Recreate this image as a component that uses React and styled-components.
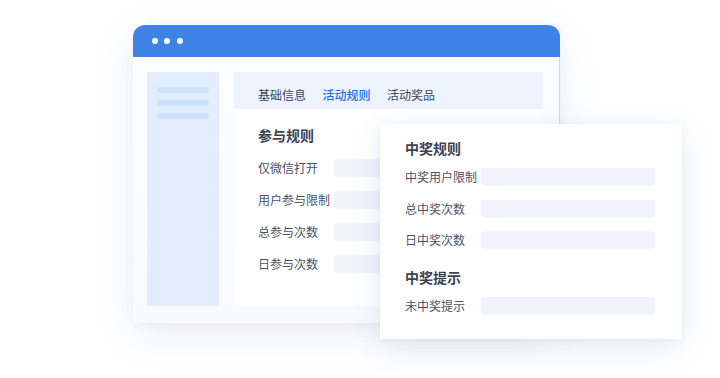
import styled, { createGlobalStyle } from 'styled-components';

const GlobalStyle = createGlobalStyle`
	* {
		box-sizing: border-box;
	}
	body {
		margin: 0;
		background: #fff;
		font-family: 'Noto Sans CJK SC', 'Noto Sans', sans-serif;
		-webkit-font-smoothing: antialiased;
	}
`;

const tabs = [
	{ label: '基础信息' },
	{ label: '活动规则', active: true },
	{ label: '活动奖品' },
];

const joinRules = ['仅微信打开', '用户参与限制', '总参与次数', '日参与次数'];
const winRules = ['中奖用户限制', '总中奖次数', '日中奖次数'];

export default function App() {
	return (
		<>
			<GlobalStyle />
			<Stage>
				<Window>
					<TitleBar>
						<Dot />
						<Dot />
						<Dot />
					</TitleBar>
					<WindowBody>
						<Sidebar>
							<SideLine />
							<SideLine />
							<SideLine />
						</Sidebar>
						<MainPanel>
							<Tabs>
								{tabs.map((t) => (
									<Tab key={t.label} $active={t.active}>
										{t.label}
									</Tab>
								))}
							</Tabs>
							<PanelContent>
								<SectionTitle>参与规则</SectionTitle>
								<FieldList>
									{joinRules.map((label) => (
										<FieldRow key={label}>
											<FieldLabel>{label}</FieldLabel>
											<FieldInput />
										</FieldRow>
									))}
								</FieldList>
							</PanelContent>
						</MainPanel>
					</WindowBody>
				</Window>

				<FloatCard>
					<SectionTitle>中奖规则</SectionTitle>
					<FieldList $gap={13.5}>
						{winRules.map((label) => (
							<FieldRow key={label}>
								<FieldLabel>{label}</FieldLabel>
								<FieldInput />
							</FieldRow>
						))}
					</FieldList>
					<SectionTitle $top={18}>中奖提示</SectionTitle>
					<FieldList>
						<FieldRow>
							<FieldLabel>未中奖提示</FieldLabel>
							<FieldInput />
						</FieldRow>
					</FieldList>
				</FloatCard>
			</Stage>
		</>
	);
}

const Stage = styled.div`
	position: relative;
	width: 720px;
	height: 378px;
	padding: 25px 0 0 133px;
	overflow: hidden;
`;

const Window = styled.div`
	width: 427px;
	height: 298px;
	border-radius: 12px 12px 0 0;
	display: flex;
	flex-direction: column;
	box-shadow: 0 12px 40px rgba(70, 100, 170, 0.1), 0 2px 10px rgba(70, 100, 170, 0.05);
`;

const TitleBar = styled.div`
	height: 32px;
	flex: none;
	background: #3f83e6;
	border-radius: 12px 12px 0 0;
	display: flex;
	align-items: center;
	gap: 6.5px;
	padding-left: 18.5px;
`;

const Dot = styled.span`
	width: 6px;
	height: 6px;
	border-radius: 50%;
	background: #fff;
`;

const WindowBody = styled.div`
	flex: 1;
	display: flex;
	gap: 15px;
	padding: 15px 16px 17px 14px;
	background: linear-gradient(180deg, #fcfdff 0%, #f8faff 100%);
	border-right: 1px solid #c9dcfa;
`;

const Sidebar = styled.div`
	width: 72px;
	flex: none;
	background: #e2edfd;
	display: flex;
	flex-direction: column;
	gap: 7px;
	padding: 15px 10px 0;
`;

const SideLine = styled.div`
	height: 6px;
	border-radius: 3px;
	background: #cfe0fb;
`;

const MainPanel = styled.div`
	flex: 1;
	display: flex;
	flex-direction: column;
	background: #fff;
`;

const Tabs = styled.div`
	height: 37px;
	flex: none;
	display: flex;
	gap: 16.5px;
	padding: 14px 0 0 24px;
	background: #edf4ff;
`;

const Tab = styled.span`
	font-size: 12px;
	line-height: 17px;
	color: ${(p) => (p.$active ? '#1b6fe6' : '#3d4457')};
	font-weight: ${(p) => (p.$active ? 500 : 400)};
`;

const PanelContent = styled.div`
	padding: 16px 24px 0;
`;

const SectionTitle = styled.div`
	font-size: 14px;
	line-height: 20px;
	font-weight: 600;
	color: #3a4254;
	margin-top: ${(p) => p.$top || 0}px;
`;

const FieldList = styled.div`
	display: flex;
	flex-direction: column;
	gap: ${(p) => p.$gap ?? 14}px;
	margin-top: 14px;
`;

const FieldRow = styled.div`
	display: grid;
	grid-template-columns: 76px 1fr;
	align-items: center;
	height: 18px;
`;

const FieldLabel = styled.span`
	font-size: 12px;
	line-height: 18px;
	color: #4a5267;
	white-space: nowrap;
`;

const FieldInput = styled.div`
	height: 18px;
	border-radius: 3px;
	background: #f1f4fb;
`;

const FloatCard = styled.div`
	position: absolute;
	left: 380px;
	top: 124px;
	width: 302px;
	height: 215px;
	padding: 14px 27px 0 25px;
	background: #fff;
	box-shadow: 0 8px 30px rgba(60, 90, 160, 0.12), 0 1px 6px rgba(60, 90, 160, 0.06);

	${FieldList} {
		margin-top: 10px;
	}
`;
